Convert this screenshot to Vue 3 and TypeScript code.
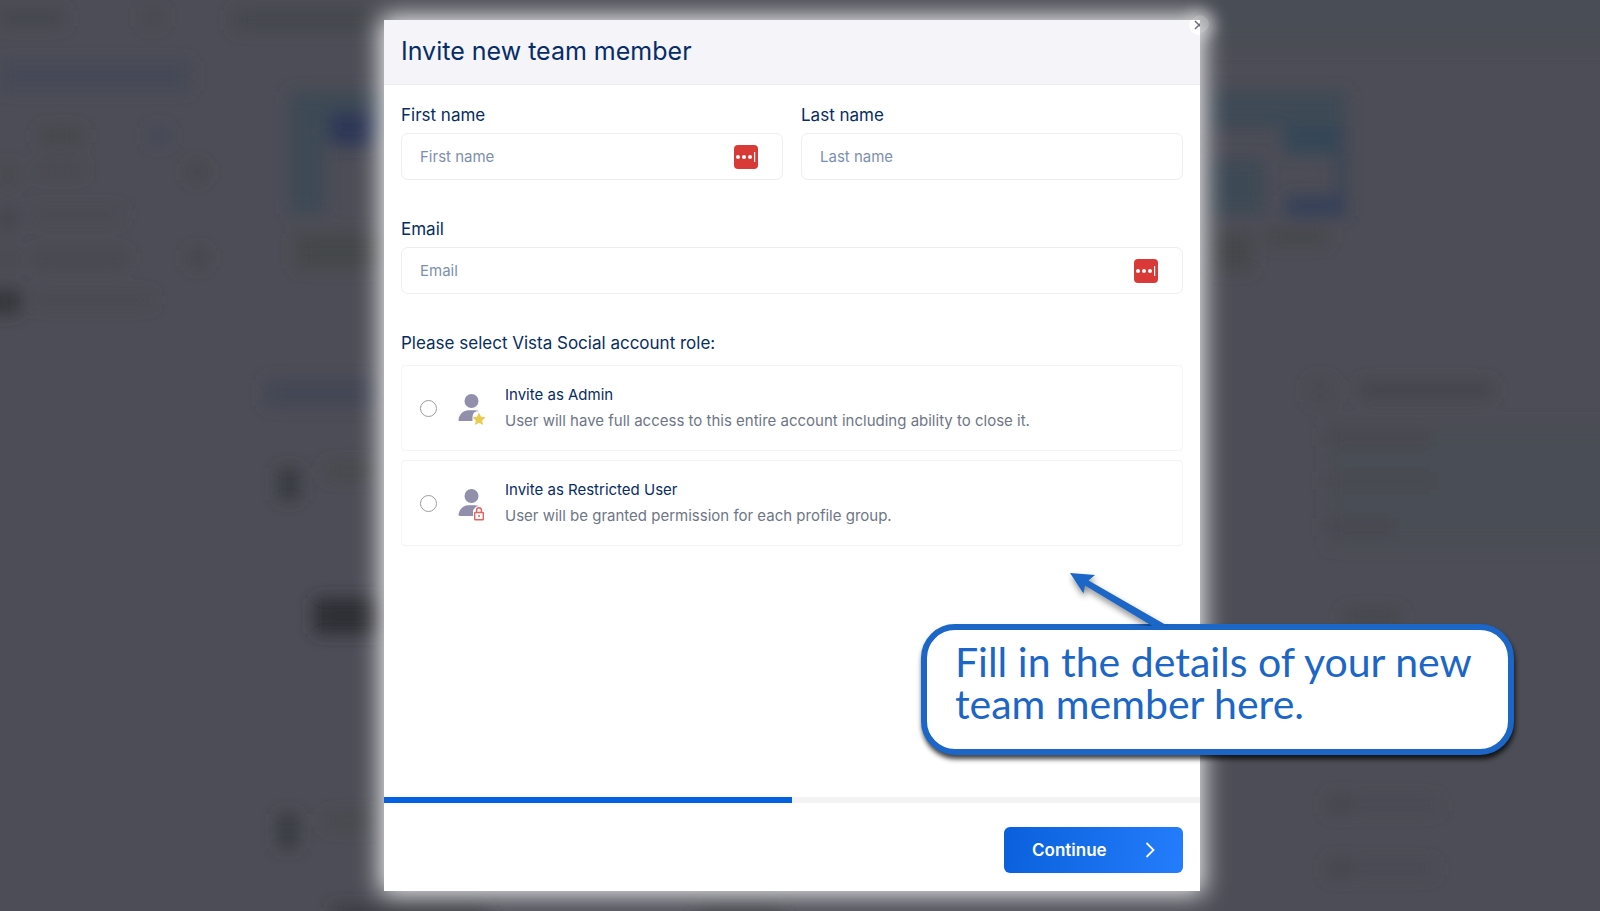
<script setup lang="ts">
import { ref } from 'vue'

interface Shade {
  x: number
  y: number
  w: number
  h: number
  fill: string
}

interface Role {
  id: string
  title: string
  text: string
}

const firstName = ref('')
const lastName = ref('')
const email = ref('')
const role = ref('')
const progress = 50

const roles: Role[] = [
  {
    id: 'admin',
    title: 'Invite as Admin',
    text: 'User will have full access to this entire account including ability to close it.',
  },
  {
    id: 'restricted',
    title: 'Invite as Restricted User',
    text: 'User will be granted permission for each profile group.',
  },
]

// Out-of-focus dashboard behind the dialog
const shades: Shade[] = [
  { x: 0, y: 10, w: 64, h: 16, fill: '#45464e' },
  { x: 145, y: 8, w: 16, h: 18, fill: '#474850' },
  { x: 234, y: 10, w: 150, h: 20, fill: '#45464d' },
  { x: 0, y: 62, w: 190, h: 28, fill: '#454a56' },
  { x: 40, y: 129, w: 42, h: 14, fill: '#45474a' },
  { x: 150, y: 128, w: 18, h: 16, fill: '#434858' },
  { x: 36, y: 165, w: 48, h: 10, fill: '#49474e' },
  { x: 0, y: 166, w: 16, h: 18, fill: '#46484b' },
  { x: 190, y: 164, w: 14, h: 16, fill: '#44454a' },
  { x: 32, y: 209, w: 90, h: 12, fill: '#484951' },
  { x: 0, y: 208, w: 16, h: 20, fill: '#43444b' },
  { x: 34, y: 252, w: 92, h: 14, fill: '#49474e' },
  { x: 0, y: 252, w: 14, h: 14, fill: '#46484b' },
  { x: 190, y: 250, w: 16, h: 16, fill: '#45454a' },
  { x: -10, y: 290, w: 30, h: 24, fill: '#34353a' },
  { x: 34, y: 294, w: 118, h: 12, fill: '#484951' },
  { x: 290, y: 92, w: 110, h: 46, fill: '#3d4854' },
  { x: 290, y: 92, w: 34, h: 122, fill: '#3e4854' },
  { x: 330, y: 112, w: 44, h: 34, fill: '#2f3956' },
  { x: 296, y: 234, w: 90, h: 34, fill: '#45474a' },
  { x: 266, y: 380, w: 110, h: 26, fill: '#424755' },
  { x: 278, y: 468, w: 22, h: 32, fill: '#393a41' },
  { x: 326, y: 464, w: 50, h: 14, fill: '#474849' },
  { x: 314, y: 598, w: 70, h: 36, fill: '#2d2e36' },
  { x: 278, y: 814, w: 20, h: 34, fill: '#393a3f' },
  { x: 326, y: 814, w: 50, h: 14, fill: '#47484b' },
  { x: 332, y: 906, w: 156, h: 12, fill: '#37383e' },
  { x: 700, y: 906, w: 80, h: 12, fill: '#3c3d43' },
  { x: 1210, y: 92, w: 136, h: 36, fill: '#3e4854' },
  { x: 1284, y: 126, w: 62, h: 28, fill: '#344656' },
  { x: 1210, y: 160, w: 54, h: 54, fill: '#3e4854' },
  { x: 1336, y: 126, w: 10, h: 88, fill: '#3a4455' },
  { x: 1286, y: 196, w: 60, h: 20, fill: '#364159' },
  { x: 1266, y: 230, w: 62, h: 14, fill: '#45474a' },
  { x: 1214, y: 234, w: 38, h: 36, fill: '#454749' },
  { x: 1310, y: 380, w: 22, h: 22, fill: '#484951' },
  { x: 1360, y: 382, w: 132, h: 16, fill: '#44454b' },
  { x: 1326, y: 428, w: 104, h: 18, fill: '#484750' },
  { x: 1326, y: 472, w: 108, h: 18, fill: '#494851' },
  { x: 1326, y: 518, w: 68, h: 18, fill: '#494751' },
  { x: 1344, y: 610, w: 56, h: 14, fill: '#45464b' },
  { x: 1328, y: 796, w: 22, h: 18, fill: '#45464e' },
  { x: 1350, y: 798, w: 88, h: 14, fill: '#494a52' },
  { x: 1328, y: 860, w: 22, h: 18, fill: '#45464e' },
  { x: 1350, y: 862, w: 84, h: 14, fill: '#494a52' },
]
</script>

<template>
  <div class="page">
    <svg class="backdrop" viewBox="0 0 1600 911" preserveAspectRatio="none" aria-hidden="true">
      <defs>
        <filter id="soft" x="-5%" y="-5%" width="110%" height="110%">
          <feGaussianBlur stdDeviation="8" />
        </filter>
      </defs>
      <g filter="url(#soft)">
        <rect x="1200" y="-20" width="420" height="66" fill="#4a4d55" />
        <rect x="1330" y="426" width="290" height="120" fill="#4a4d55" />
        <rect
          v-for="(s, i) in shades"
          :key="i"
          :x="s.x"
          :y="s.y"
          :width="s.w"
          :height="s.h"
          :fill="s.fill"
        />
      </g>
    </svg>

    <div class="stage">
      <span class="close-glow"></span>
      <form class="dialog" role="dialog" aria-labelledby="dialog-title" @submit.prevent>
        <header class="head">
          <h1 id="dialog-title">Invite new team member</h1>
          <button class="close" type="button" aria-label="Close">
            <svg viewBox="0 0 10 10" width="10" height="10">
              <path d="M1 1l8 8M9 1l-8 8" stroke="#6d6e78" stroke-width="1.5" fill="none" />
            </svg>
          </button>
        </header>

        <div class="body">
          <div class="names">
            <div class="field">
              <label for="first">First name</label>
              <div class="control">
                <input id="first" v-model="firstName" type="text" placeholder="First name" />
                <svg class="vault" viewBox="0 0 24 24" aria-hidden="true">
                  <rect width="24" height="24" rx="4" fill="#d93a37" />
                  <circle cx="4" cy="12" r="2" fill="#fff" />
                  <circle cx="10" cy="12" r="2" fill="#fff" />
                  <circle cx="16" cy="12" r="2" fill="#fff" />
                  <rect x="20" y="7" width="1.2" height="10" fill="#fff" />
                </svg>
              </div>
            </div>
            <div class="field">
              <label for="last">Last name</label>
              <div class="control">
                <input id="last" v-model="lastName" type="text" placeholder="Last name" />
              </div>
            </div>
          </div>

          <div class="field">
            <label for="email">Email</label>
            <div class="control">
              <input id="email" v-model="email" type="email" placeholder="Email" />
              <svg class="vault" viewBox="0 0 24 24" aria-hidden="true">
                <rect width="24" height="24" rx="4" fill="#d93a37" />
                <circle cx="4" cy="12" r="2" fill="#fff" />
                <circle cx="10" cy="12" r="2" fill="#fff" />
                <circle cx="16" cy="12" r="2" fill="#fff" />
                <rect x="20" y="7" width="1.2" height="10" fill="#fff" />
              </svg>
            </div>
          </div>

          <fieldset class="roles">
            <legend>Please select Vista Social account role:</legend>
            <label v-for="r in roles" :key="r.id" class="role" :for="r.id">
              <input :id="r.id" v-model="role" type="radio" name="role" :value="r.id" />
              <svg class="person" viewBox="0 -2 32 36" aria-hidden="true">
                <circle cx="15.5" cy="9" r="7" fill="#918fab" />
                <path d="M2.500 27.500C3.500 22 7.500 18.200 12.500 18.200h6c3 0 5 .8 6 2V29H4C2.900 29 2.300 28.500 2.500 27.500Z" fill="#918fab" />
                <template v-if="r.id === 'admin'">
                  <path d="M16.500 30V25q0-6 6.500-6h5v11z" fill="#fff" />
                  <path
                    d="M23 20.400l2 4.300 4.600.5-3.400 3.200.9 4.600-4.100-2.300-4.100 2.300.9-4.600-3.400-3.200 4.600-.5z"
                    fill="#ecc94f"
                  />
                </template>
                <template v-else>
                  <path d="M17 30v-6q2-5 6-5h5v11z" fill="#fff" />
                  <rect x="18.700" y="25.500" width="8.600" height="7.300" rx=".6" fill="#fff" stroke="#e5625f" stroke-width="1.400" />
                  <path d="M20.600 25.500v-2.300a2.400 2.400 0 0 1 4.800 0v2.300" fill="none" stroke="#e5625f" stroke-width="1.400" />
                  <circle cx="23" cy="29.100" r="1" fill="#e5625f" />
                </template>
              </svg>
              <span class="copy">
                <span class="role-title">{{ r.title }}</span>
                <span class="role-text">{{ r.text }}</span>
              </span>
            </label>
          </fieldset>
        </div>

        <div class="track" role="progressbar" :aria-valuenow="progress" aria-valuemin="0" aria-valuemax="100">
          <div class="bar" :style="{ width: progress + '%' }"></div>
        </div>

        <footer class="foot">
          <button class="continue" type="submit">
            <span>Continue</span>
            <svg viewBox="0 0 10 16" width="10" height="16" aria-hidden="true">
              <path d="M1.500 1l7 7-7 7" fill="none" stroke="#fff" stroke-width="1.800" />
            </svg>
          </button>
        </footer>
      </form>

      <div class="callout">
        <svg class="arrow" viewBox="0 0 104 60" width="104" height="60" aria-hidden="true">
          <path d="M2 2L27 4 20.500 9.500 98 54 86 56 17 14.500 15.500 22.500Z" fill="#1b66c6" />
        </svg>
        <p>Fill in the details of your new team member here.</p>
      </div>
    </div>
  </div>
</template>

<style>
body {
  margin: 0;
}
</style>

<style scoped>
.page {
  position: relative;
  box-sizing: border-box;
  min-height: 100vh;
  padding: 20px 0;
  overflow: hidden;
  background: #4c4d56;
  font-family: Inter, "Liberation Sans", sans-serif;
  color: #072d66;
}

.backdrop {
  position: absolute;
  inset: 0;
  width: 100%;
  height: 100%;
}

.stage {
  position: relative;
  width: 51%;
  margin-left: 24%;
}

.close-glow {
  position: absolute;
  top: -5px;
  right: -9px;
  width: 18px;
  height: 18px;
  border-radius: 50%;
  background: rgba(255, 255, 255, 0.4);
  box-shadow: 0 0 14px 6px rgba(255, 255, 255, 0.4);
}

.dialog {
  position: relative;
  display: flex;
  flex-direction: column;
  min-height: calc(100vh - 40px);
  background: #fff;
  box-shadow: 0 0 24px 3px rgba(255, 255, 255, 0.95);
}

.head {
  position: relative;
  display: flex;
  align-items: center;
  box-sizing: border-box;
  height: 65px;
  padding: 0 17px 2px;
  overflow: hidden;
  border-bottom: 1px solid #ececf2;
  background: #f4f4f9;
}

.head h1 {
  margin: 0;
  font-size: 25px;
  font-weight: 400;
  line-height: 36px;
}

.close {
  position: absolute;
  top: -5px;
  right: -9px;
  display: flex;
  align-items: center;
  justify-content: center;
  width: 20px;
  height: 20px;
  padding: 0;
  border: 0;
  border-radius: 50%;
  background: #fff;
}

.body {
  display: flex;
  flex: 1;
  flex-direction: column;
  gap: 37px;
  padding: 18px 17px 24px;
}

.names {
  display: grid;
  grid-template-columns: 1fr 1fr;
  gap: 18px;
}

.field {
  display: flex;
  flex-direction: column;
  gap: 6px;
}

.field label,
.roles legend {
  font-size: 17px;
  line-height: 24px;
}

.control {
  display: flex;
  align-items: center;
  box-sizing: border-box;
  height: 47px;
  padding: 0 24px 0 18px;
  border: 1px solid #eceef2;
  border-radius: 7px;
}

.control input {
  flex: 1;
  min-width: 0;
  padding: 0;
  border: 0;
  outline: 0;
  background: none;
  font: inherit;
  font-size: 15px;
  line-height: 24px;
  color: #072d66;
}

.control input::placeholder {
  color: #7d8fb0;
  opacity: 1;
}

.vault {
  width: 24px;
  height: 24px;
}

.roles {
  display: flex;
  flex-direction: column;
  gap: 9px;
  margin: 0;
  padding: 0;
  border: 0;
}

.roles legend {
  margin-bottom: 10px;
  padding: 0;
}

.role {
  display: flex;
  align-items: center;
  box-sizing: border-box;
  min-height: 86px;
  padding: 0 18px;
  border: 1px solid #f3f4f7;
  border-radius: 4px;
}

.role input {
  box-sizing: border-box;
  width: 17px;
  height: 17px;
  margin: 0 19px 0 0;
  border: 1px solid #9b9ca3;
  border-radius: 50%;
  background: #fff;
  appearance: none;
}

.role input:checked {
  border: 5px solid #0b61dd;
}

.person {
  flex: none;
  width: 32px;
  height: 36px;
  margin-right: 17px;
}

.copy {
  display: flex;
  flex-direction: column;
  font-size: 15px;
  line-height: 26px;
}

.role-text {
  color: #6e7687;
}

.track {
  height: 6px;
  background: #f3f3f3;
}

.bar {
  height: 100%;
  background: #0561e0;
}

.foot {
  display: flex;
  justify-content: flex-end;
  padding: 24px 17px 18px;
}

.continue {
  display: flex;
  align-items: center;
  justify-content: space-between;
  width: 179px;
  height: 46px;
  padding: 0 28px;
  border: 0;
  border-radius: 6px;
  background: linear-gradient(100deg, #0a60dc, #247dfc);
  color: #fff;
  font: inherit;
  font-size: 17px;
  font-weight: 600;
  line-height: 24px;
}

.callout {
  position: absolute;
  bottom: 136px;
  left: 537px;
  box-sizing: border-box;
  width: 593px;
  padding: 11px 20px 24px 28px;
  border: 6px solid #1b66c6;
  border-radius: 34px;
  background: #fff;
  box-shadow: 1px 4px 5px rgba(0, 0, 0, 0.75);
  color: #1b66c6;
}

.callout p {
  margin: 0;
  font-family: Lato, "Liberation Sans", sans-serif;
  font-size: 41px;
  line-height: 42px;
}

.arrow {
  position: absolute;
  top: -59px;
  left: 141px;
  filter: drop-shadow(1px 4px 3px rgba(0, 0, 0, 0.45));
  clip-path: inset(0 0 5px 0);
}
</style>
